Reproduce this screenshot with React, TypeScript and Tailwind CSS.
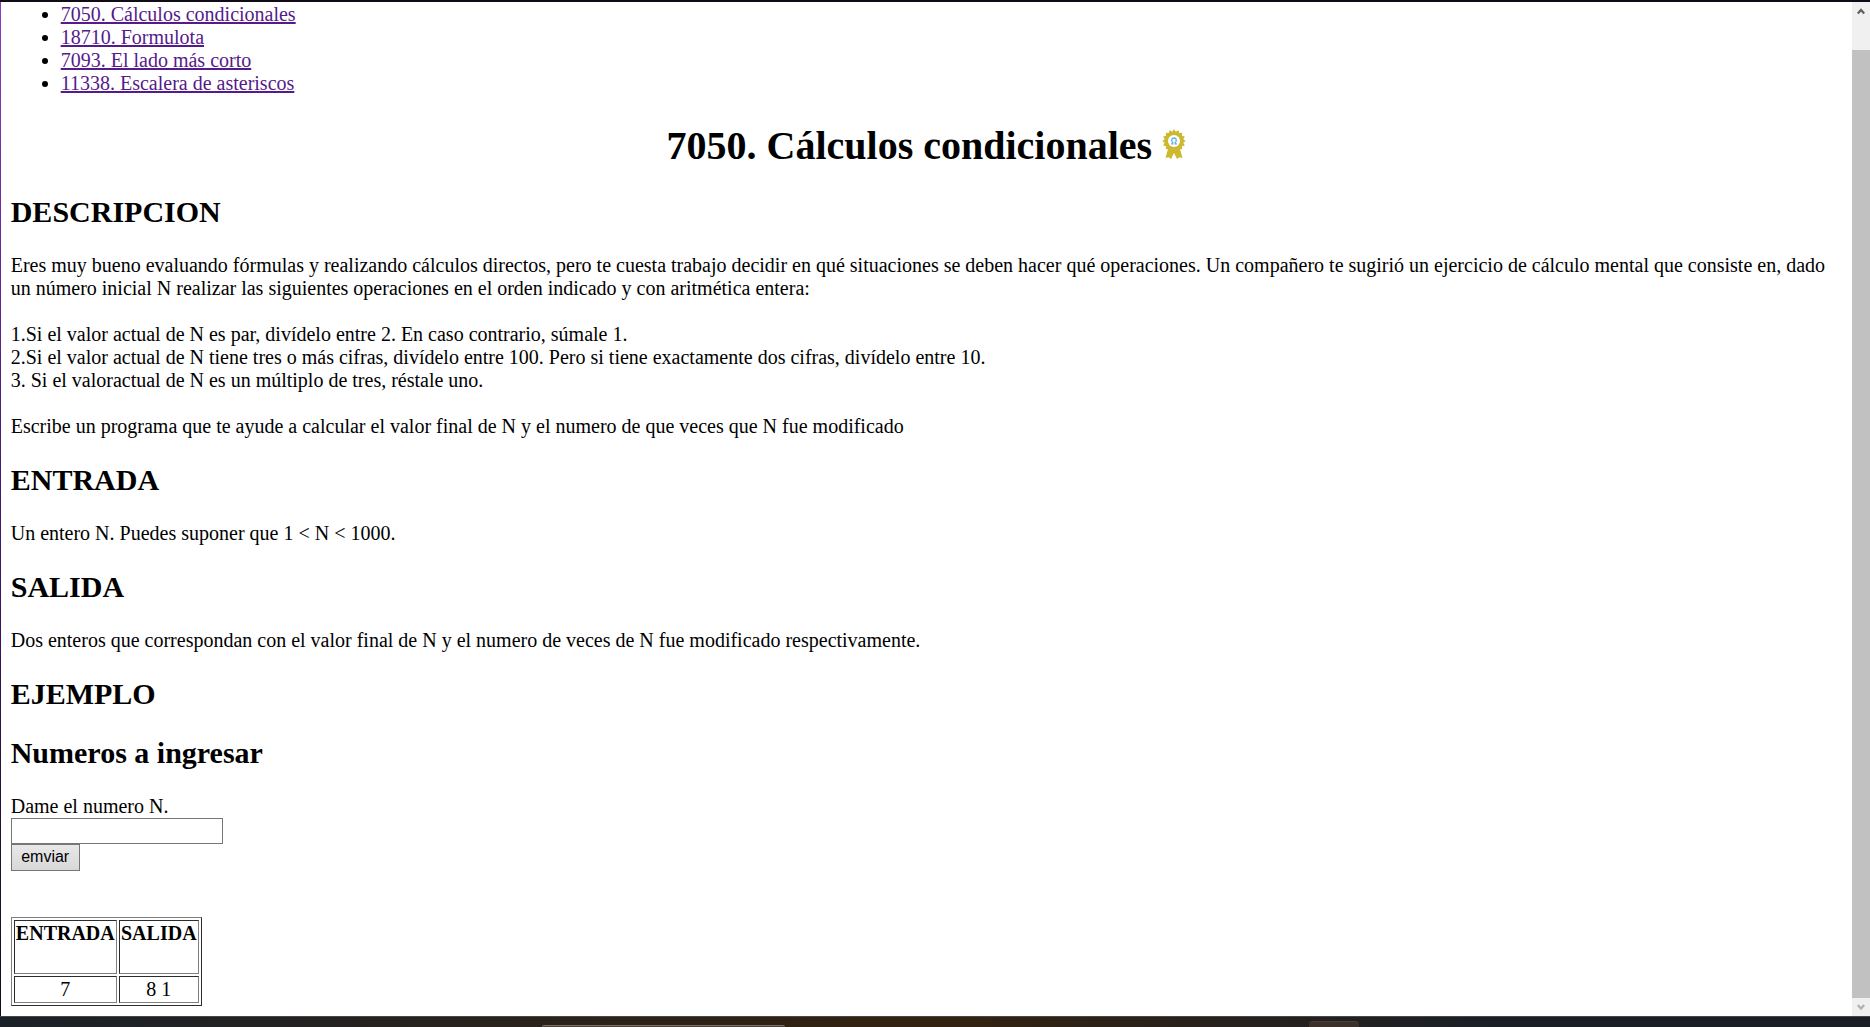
import type { ReactNode } from 'react';

const problems = [
  '7050. Cálculos condicionales',
  '18710. Formulota',
  '7093. El lado más corto',
  '11338. Escalera de asteriscos',
];

function SectionTitle({ children }: { children: ReactNode }) {
  return <h2 className="my-[25px] text-[30px] leading-[34px] font-bold">{children}</h2>;
}

function Medal() {
  const teeth = Array.from({ length: 32 }, (_, i) => {
    const r = i % 2 ? 9.5 : 11.7;
    const a = (i * Math.PI) / 16;
    return `${12 + r * Math.sin(a)},${12 - r * Math.cos(a)}`;
  }).join(' ');
  return (
    <svg viewBox="0 0 24 30" className="inline-block h-[30px] w-6 align-baseline" aria-hidden="true">
      <path d="M6.500 18 L3.500 29 L6.500 28.200 L9 30 L12 24 L15 30 L17.500 28.200 L20.500 29 L17.500 18 Z" fill="#cdb92f" />
      <polygon points={teeth} fill="#cdb92f" />
      <circle cx="12" cy="12" r="6" fill="#fff" />
      <path d="M9 14.800 h1.800 v-1.300 c-1.800-1.500-1.500-4.500 1.200-4.500 s3 3 1.200 4.500 v1.300 h1.800" fill="none" stroke="#5fb0e4" strokeWidth="1.300" />
    </svg>
  );
}

function Scrollbar() {
  return (
    <div className="flex w-[18px] shrink-0 flex-col bg-[#f0f0f0]" aria-hidden="true">
      <div className="flex h-12 justify-center pt-1.5">
        <svg viewBox="0 0 8 8" className="h-2 w-2">
          <path d="M0.800 5.500 L4 2 L7.200 5.500" fill="none" stroke="#606060" strokeWidth="2.200" />
        </svg>
      </div>
      <div className="grow bg-[#c1c1c1]" />
      <div className="flex h-[18px] items-center justify-center">
        <svg viewBox="0 0 8 8" className="h-2 w-2">
          <path d="M0.800 2 L4 5.500 L7.200 2" fill="none" stroke="#b0b0b0" strokeWidth="2.200" />
        </svg>
      </div>
    </div>
  );
}

export default function App() {
  return (
    <div className="flex min-h-screen flex-col bg-white font-['Liberation_Serif',serif] text-[20px] leading-[23px] text-black">
      <div className="h-0.5 bg-[#110b17]" />
      <div className="flex grow">
        <div className="w-px bg-linear-to-b from-[#8a3cc4] via-[#43186e] to-[#120a1c]" />
        <main className="grow px-2.5 pt-px">
          <ul className="list-disc pl-[50px]">
            {problems.map((p) => (
              <li key={p}>
                <a href="#" className="text-[#551a8b] underline">{p}</a>
              </li>
            ))}
          </ul>
          <h1 className="mt-7 mb-[26px] text-center text-[40px] leading-[46px] font-bold">
            7050. Cálculos condicionales <Medal />
          </h1>
          <SectionTitle>DESCRIPCION</SectionTitle>
          <p>
            Eres muy bueno evaluando fórmulas y realizando cálculos directos, pero te cuesta trabajo decidir en qué
            situaciones se deben hacer qué operaciones. Un compañero te sugirió un ejercicio de cálculo mental que
            consiste en, dado un número inicial N realizar las siguientes operaciones en el orden indicado y con
            aritmética entera:
          </p>
          <p className="mt-[23px]">
            1.Si el valor actual de N es par, divídelo entre 2. En caso contrario, súmale 1.<br />
            2.Si el valor actual de N tiene tres o más cifras, divídelo entre 100. Pero si tiene exactamente dos
            cifras, divídelo entre 10.<br />
            3. Si el valoractual de N es un múltiplo de tres, réstale uno.
          </p>
          <p className="mt-[23px]">
            Escribe un programa que te ayude a calcular el valor final de N y el numero de que veces que N fue
            modificado
          </p>
          <SectionTitle>ENTRADA</SectionTitle>
          <p>Un entero N. Puedes suponer que 1 &lt; N &lt; 1000.</p>
          <SectionTitle>SALIDA</SectionTitle>
          <p>Dos enteros que correspondan con el valor final de N y el numero de veces de N fue modificado respectivamente.</p>
          <SectionTitle>EJEMPLO</SectionTitle>
          <SectionTitle>Numeros a ingresar</SectionTitle>
          <form className="flex flex-col items-start" onSubmit={(e) => e.preventDefault()}>
            <label htmlFor="numero">Dame el numero N.</label>
            <input id="numero" type="text" className="h-[26px] w-[212px] border border-[#767676] bg-white px-1" />
            <button
              type="submit"
              className="h-[27px] w-[69px] border border-[#767676] bg-linear-to-b from-[#e8e8e8] to-[#d8d8d8] pb-0.5 text-center font-['Liberation_Sans',sans-serif] text-[16px] leading-[23px]"
            >
              emviar
            </button>
          </form>
          <table className="mt-[46px] mb-2.5 w-[191px] border-separate border-spacing-0.5 border border-t-[#808080] border-r-[#2c2c2c] border-b-[#2c2c2c] border-l-[#808080] text-center">
            <thead>
              <tr>
                {['ENTRADA', 'SALIDA'].map((h) => (
                  <th key={h} className="h-[54px] border border-t-[#2c2c2c] border-r-[#808080] border-b-[#808080] border-l-[#2c2c2c] px-px pt-px align-top font-bold">
                    {h}
                  </th>
                ))}
              </tr>
            </thead>
            <tbody>
              <tr>
                {['7', '8 1'].map((v) => (
                  <td key={v} className="border border-t-[#2c2c2c] border-r-[#808080] border-b-[#808080] border-l-[#2c2c2c] p-px">
                    {v}
                  </td>
                ))}
              </tr>
            </tbody>
          </table>
        </main>
        <Scrollbar />
      </div>
      <div className="flex h-[11px] items-end overflow-hidden border-t border-[#4a4643] bg-linear-to-r from-[#1b2128] via-[#33220f] to-[#1a1f26] to-80%" aria-hidden="true">
        <div className="ml-[29%] h-0.5 w-[13%] rounded-t-sm border-t border-[#7d726a] bg-[#4a4038]" />
        <div className="ml-[28%] h-1.5 w-[50px] rounded-t-sm border-t border-[#4a403a] bg-[#3c302a]" />
      </div>
    </div>
  );
}
